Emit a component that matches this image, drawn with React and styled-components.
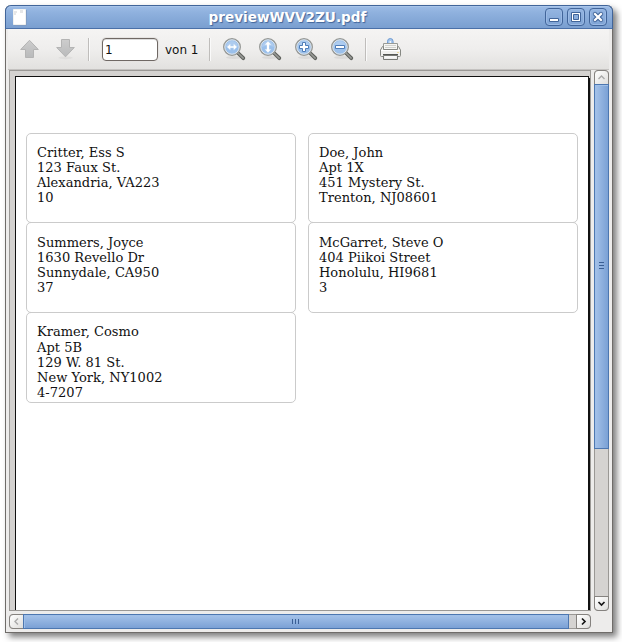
import React from "react";
import styled, { createGlobalStyle, css } from "styled-components";

const GlobalStyle = createGlobalStyle`
  * { box-sizing: border-box; }
  body { margin: 0; background: #fff; overflow: hidden; }
  svg { display: block; }
`;

const Desktop = styled.main`
  width: 622px;
  height: 642px;
  padding: 5px 9px 9px 5px;
  font-family: "DejaVu Sans", sans-serif;
`;

const Window = styled.section`
  display: flex;
  flex-direction: column;
  width: 608px;
  height: 628px;
  border: 1px solid #6f6c69;
  border-top: 0;
  border-radius: 6px 6px 0 0;
  background: #edeceb;
  box-shadow: 4px 4px 6px rgba(0, 0, 0, 0.5);
`;

const TitleBar = styled.header`
  display: flex;
  align-items: center;
  flex: none;
  height: 24px;
  margin: 0 -1px;
  padding: 0 5px 0 7px;
  border: 1px solid #41659a;
  border-bottom-color: #4a70a8;
  border-radius: 6px 6px 0 0;
  background: linear-gradient(#9dbce6 0, #8fb1de 30%, #7a9fd0 100%);
  box-shadow: inset 0 1px #a9c5ea;
`;

const Title = styled.h1`
  flex: 1;
  margin: 0;
  padding-left: 3px;
  color: #fff;
  font-size: 13.6px;
  line-height: 22px;
  font-weight: bold;
  text-align: center;
  text-shadow: 1px 1px 1px #41659a;
`;

const WindowButtons = styled.div`
  display: flex;
  gap: 4px;
`;

const WindowButton = styled.button`
  width: 18px;
  height: 18px;
  padding: 0;
  border: 1px solid #41659a;
  border-radius: 4px;
  background: linear-gradient(#94b5e1, #7fa4d5);
  box-shadow: inset 0 0 0 1px #9bbae5;
`;

const Toolbar = styled.nav`
  display: flex;
  align-items: center;
  flex: none;
  height: 41px;
  margin: 0 3px 0 2px;
  padding-left: 9px;
  border-bottom: 1px solid #c4c2c0;
  background: linear-gradient(#f5f4f3, #efeeed 50%, #e2e1df);
`;

const ToolButton = styled.button`
  width: 24px;
  height: 24px;
  margin-right: ${(p) => p.$after ?? 12}px;
  padding: 0;
  border: 0;
  background: none;
`;

const Separator = styled.span`
  width: 2px;
  height: 23px;
  margin-right: ${(p) => p.$after}px;
  border-left: 1px solid #bfbdbb;
  border-right: 1px solid #fafafa;
`;

const PageInput = styled.input`
  width: 56px;
  height: 23px;
  padding: 1px 2px 0;
  border: 1px solid #6f6864;
  border-radius: 4px;
  outline: 0;
  background: #fff;
  box-shadow: inset 0 1px #ddd, 0 0 0 1px #e6e4e2;
  color: #111;
  font: 12px "DejaVu Sans", sans-serif;
`;

const PageCount = styled.span`
  width: 44px;
  margin: 1px 0 0 7px;
  color: #111;
  font-size: 12px;
  white-space: nowrap;
`;

const Content = styled.div`
  display: grid;
  grid-template-columns: 582px 15px;
  grid-template-rows: 541px 15px;
  gap: 3px;
  margin-left: 3px;
`;

const Viewport = styled.div`
  overflow: hidden;
  padding: 5px 0 0 5px;
  border: 1px solid #9a9895;
  background: #d4d2d0;
`;

const Page = styled.article`
  width: 574px;
  height: 560px;
  padding: 56px 0 0 10px;
  border: 1px solid #111;
  background: #fff;
  box-shadow: 1px 2px #111;
`;

const Labels = styled.div`
  display: grid;
  grid-template-columns: 270px 270px;
  grid-template-rows: 89px 90px 90px;
  column-gap: 12px;
`;

const Label = styled.address`
  height: calc(100% + 1px);
  padding: ${(p) => p.$inset}px 10px 0;
  border: 1px solid #cbcbcb;
  border-radius: 5px;
  color: #111;
  font: normal 13px/15.12px "DejaVu Serif", serif;
  letter-spacing: 0.03px;
  white-space: pre;
`;

const vertical = css`
  flex-direction: column;
  width: 15px;
  height: 541px;
`;
const horizontal = css`
  width: 582px;
  height: 15px;
`;
const Scrollbar = styled.div`
  display: flex;
  border: 1px solid #9a9895;
  border-radius: 4px;
  background: #d5d3d1;
  ${(p) => (p.$vertical ? vertical : horizontal)}
`;

const endMargin = {
  vertical: "auto -1px -1px -1px",
  horizontal: "-1px -1px -1px auto",
};

const ScrollButton = styled.button`
  display: grid;
  place-items: center;
  flex: none;
  width: 15px;
  height: 15px;
  margin: ${(p) => (p.$end ? endMargin[p.$end] : "-1px 0 0 -1px")};
  padding: 0;
  border: 1px solid #85827f;
  border-radius: ${(p) => p.$corners};
  background: linear-gradient(135deg, #fff, #dfdedc);
  color: ${(p) => (p.$end ? "#161616" : "#aaa")};
`;

const Thumb = styled.div`
  display: grid;
  place-items: center;
  flex: none;
  border: 1px solid #4d77b0;
  box-shadow: inset 1px 1px #9fbfe8;
  color: #3a5f94;
  ${(p) =>
    p.$vertical
      ? "width: 15px; height: 365px; margin: -1px 0 0 -1px; padding-bottom: 2px; background: linear-gradient(90deg, #a5c2e9, #7ba1d5);"
      : "width: 546px; height: 15px; margin: -1px 0 0 -1px; padding-right: 1px; background: linear-gradient(#a5c2e9, #7ba1d5);"}
`;

function DocumentIcon() {
  return (
    <svg width="14" height="17" viewBox="0 0 14 17">
      <path d="M.5.5h12v15H.5z" fill="#fff" stroke="#f1f2f0" />
      <path d="M13.5 1v15.5H1" fill="none" stroke="#7f9cc5" />
      <path d="M1 2h3v2H1zM7 1h3v3H7zM1 4h2v2H1z" fill="#e6e7e8" />
    </svg>
  );
}

function ArrowIcon({ down }) {
  return (
    <svg width="24" height="24" viewBox="0 0 24 24">
      <defs>
        <linearGradient id="arrowFill" x2="0" y2="1">
          <stop stopColor="#cdcdcd" />
          <stop offset="1" stopColor="#b9babb" />
        </linearGradient>
      </defs>
      {down && <ellipse cx="12.5" cy="20.8" rx="7" ry="1.4" fill="#aaa" opacity=".15" />}
      <path
        d={
          down
            ? "M8.5 2.5h8v8h4.8l-8.8 9.3-8.8-9.3h4.8z"
            : "m12.5 3.3-8.8 9.2h4.8v8h8v-8h4.8z"
        }
        fill="url(#arrowFill)"
        stroke="#b4b4b4"
      />
    </svg>
  );
}

const zoomMarks = {
  width: "m5.2 10 3-2.8v2h3.6v-2l3 2.8-3 2.8v-2H8.2v2z",
  page: "m10 4.6 2.8 3H11v4.8h1.8l-2.8 3-2.8-3H9V7.6H7.2z",
  in: "M8.5 5.5h3v3h3v3h-3v3h-3v-3h-3v-3h3z",
  out: "M5.5 8.5h9v3h-9z",
};

function ZoomIcon({ kind }) {
  const outlined = kind === "in" || kind === "out";
  return (
    <svg width="24" height="24" viewBox="0 0 24 24">
      <ellipse cx="12" cy="20.5" rx="8" ry="1.5" fill="#777" opacity=".12" />
      <path d="m16 16 5.3 5.2" stroke="#5f615d" strokeWidth="3.8" strokeLinecap="round" />
      <path d="m16.5 16.5 4.7 4.6" stroke="#999b98" strokeWidth="1.5" strokeLinecap="round" />
      <circle cx="10" cy="10" r="8.2" fill="#9bc0eb" stroke="#979996" strokeWidth="1.6" />
      <circle cx="10" cy="10" r="7.2" fill="none" stroke="#dfe5ea" />
      <path d="M4 10a6 6 0 0 1 12 0Q10 7 4 10" fill="#b9d3f1" opacity=".65" />
      <path
        d={zoomMarks[kind]}
        fill="#fff"
        stroke={outlined ? "#4f7db8" : "#fff"}
        strokeWidth={outlined ? 1 : 0.3}
      />
    </svg>
  );
}

function PrinterIcon() {
  return (
    <svg width="24" height="24" viewBox="0 0 24 24">
      <path d="M9.5 7.5V4.5q0-3 2.8-3t2.8 3v3" fill="#a7c6eb" stroke="#6f9cd3" />
      <path d="M12.3 4v4" stroke="#eef5fc" strokeWidth="1.5" />
      <path d="M5.5 6.5h14v7h-14z" fill="#f6f6f3" stroke="#999b96" />
      <path d="M7 8.5h11M7 10.5h11" stroke="#d0d1cd" />
      <path d="M4.5 9.5h1v3h14v-3h1l2 3.5v5.5q0 1-1 1h-18q-1 0-1-1V13z" fill="#f1f1ee" stroke="#868883" />
      <path d="M3 13.5h19" stroke="#fff" />
      <path d="M5 17.5h15" stroke="#555753" />
      <path d="M5.5 18.5h14v4h-14z" fill="#eeeeec" stroke="#777974" />
      <path d="M7 20h11" stroke="#fff" />
      <path d="M19.5 15.5h1" stroke="#e8c557" />
    </svg>
  );
}

const windowMarks = {
  minimize: <path d="M3.5 9.5h9v3h-9z" fill="#fff" stroke="#41659a" />,
  maximize: (
    <>
      <path d="M3.5 3.5h9v9h-9z" fill="#fff" stroke="#41659a" />
      <path d="M5.5 5.5h5v5h-5z" fill="#8aaddc" stroke="#41659a" />
    </>
  ),
  close: (
    <>
      <path d="m5 5 6 6m0-6-6 6" stroke="#41659a" strokeWidth="4.4" strokeLinecap="round" />
      <path d="m5 5 6 6m0-6-6 6" stroke="#fff" strokeWidth="2.2" strokeLinecap="square" />
    </>
  ),
};

const chevrons = {
  up: "m1.5 6 3-3 3 3",
  down: "m1.5 3 3 3 3-3",
  left: "m6 1.5-3 3 3 3",
  right: "m3 1.5 3 3-3 3",
};

function Chevron({ direction }) {
  const enabled = direction === "down" || direction === "right";
  return (
    <svg width="9" height="9" viewBox="0 0 9 9">
      <path d={chevrons[direction]} fill="none" stroke="currentColor" strokeWidth={enabled ? 1.7 : 1.4} />
    </svg>
  );
}

function Grip({ upright }) {
  return (
    <svg width="9" height="9" viewBox="0 0 9 9">
      <path
        d={upright ? "M2 1.5h5M2 4.5h5M2 7.5h5" : "M1.5 2v5M4.5 2v5M7.5 2v5"}
        stroke="currentColor"
      />
    </svg>
  );
}

const addresses = [
  "Critter, Ess S\n123 Faux St.\nAlexandria, VA223\n10",
  "Doe, John\nApt 1X\n451 Mystery St.\nTrenton, NJ08601",
  "Summers, Joyce\n1630 Revello Dr\nSunnydale, CA950\n37",
  "McGarret, Steve O\n404 Piikoi Street\nHonolulu, HI9681\n3",
  "Kramer, Cosmo\nApt 5B\n129 W. 81 St.\nNew York, NY1002\n4-7207",
];

// Text inset of each label row; the row pitch is a fraction of a pixel off.
const rowInsets = [11, 12, 11.4];

export default function App() {
  return (
    <>
      <GlobalStyle />
      <Desktop>
        <Window>
          <TitleBar>
            <DocumentIcon />
            <Title>previewWVV2ZU.pdf</Title>
            <WindowButtons>
              {Object.entries(windowMarks).map(([name, mark]) => (
                <WindowButton key={name} aria-label={name}>
                  <svg width="16" height="16" viewBox="0 0 16 16">{mark}</svg>
                </WindowButton>
              ))}
            </WindowButtons>
          </TitleBar>
          <Toolbar>
            <ToolButton aria-label="Previous page"><ArrowIcon /></ToolButton>
            <ToolButton aria-label="Next page" $after={11}><ArrowIcon down /></ToolButton>
            <Separator $after={12} />
            <PageInput defaultValue="1" aria-label="Page" />
            <PageCount>von 1</PageCount>
            <Separator $after={11} />
            {Object.keys(zoomMarks).map((kind) => (
              <ToolButton key={kind} aria-label={`Zoom ${kind}`} $after={kind === "out" ? 11 : 12}>
                <ZoomIcon kind={kind} />
              </ToolButton>
            ))}
            <Separator $after={11} />
            <ToolButton aria-label="Print"><PrinterIcon /></ToolButton>
          </Toolbar>
          <Content>
            <Viewport>
              <Page>
                <Labels>
                  {addresses.map((address, i) => (
                    <Label key={address} $inset={rowInsets[Math.floor(i / 2)]}>{address}</Label>
                  ))}
                </Labels>
              </Page>
            </Viewport>
            <Scrollbar $vertical>
              <ScrollButton $corners="4px 4px 0 0"><Chevron direction="up" /></ScrollButton>
              <Thumb $vertical><Grip upright /></Thumb>
              <ScrollButton $end="vertical" $corners="0 0 4px 4px"><Chevron direction="down" /></ScrollButton>
            </Scrollbar>
            <Scrollbar>
              <ScrollButton $corners="4px 0 0 4px"><Chevron direction="left" /></ScrollButton>
              <Thumb><Grip /></Thumb>
              <ScrollButton $end="horizontal" $corners="0 4px 4px 0"><Chevron direction="right" /></ScrollButton>
            </Scrollbar>
          </Content>
        </Window>
      </Desktop>
    </>
  );
}
